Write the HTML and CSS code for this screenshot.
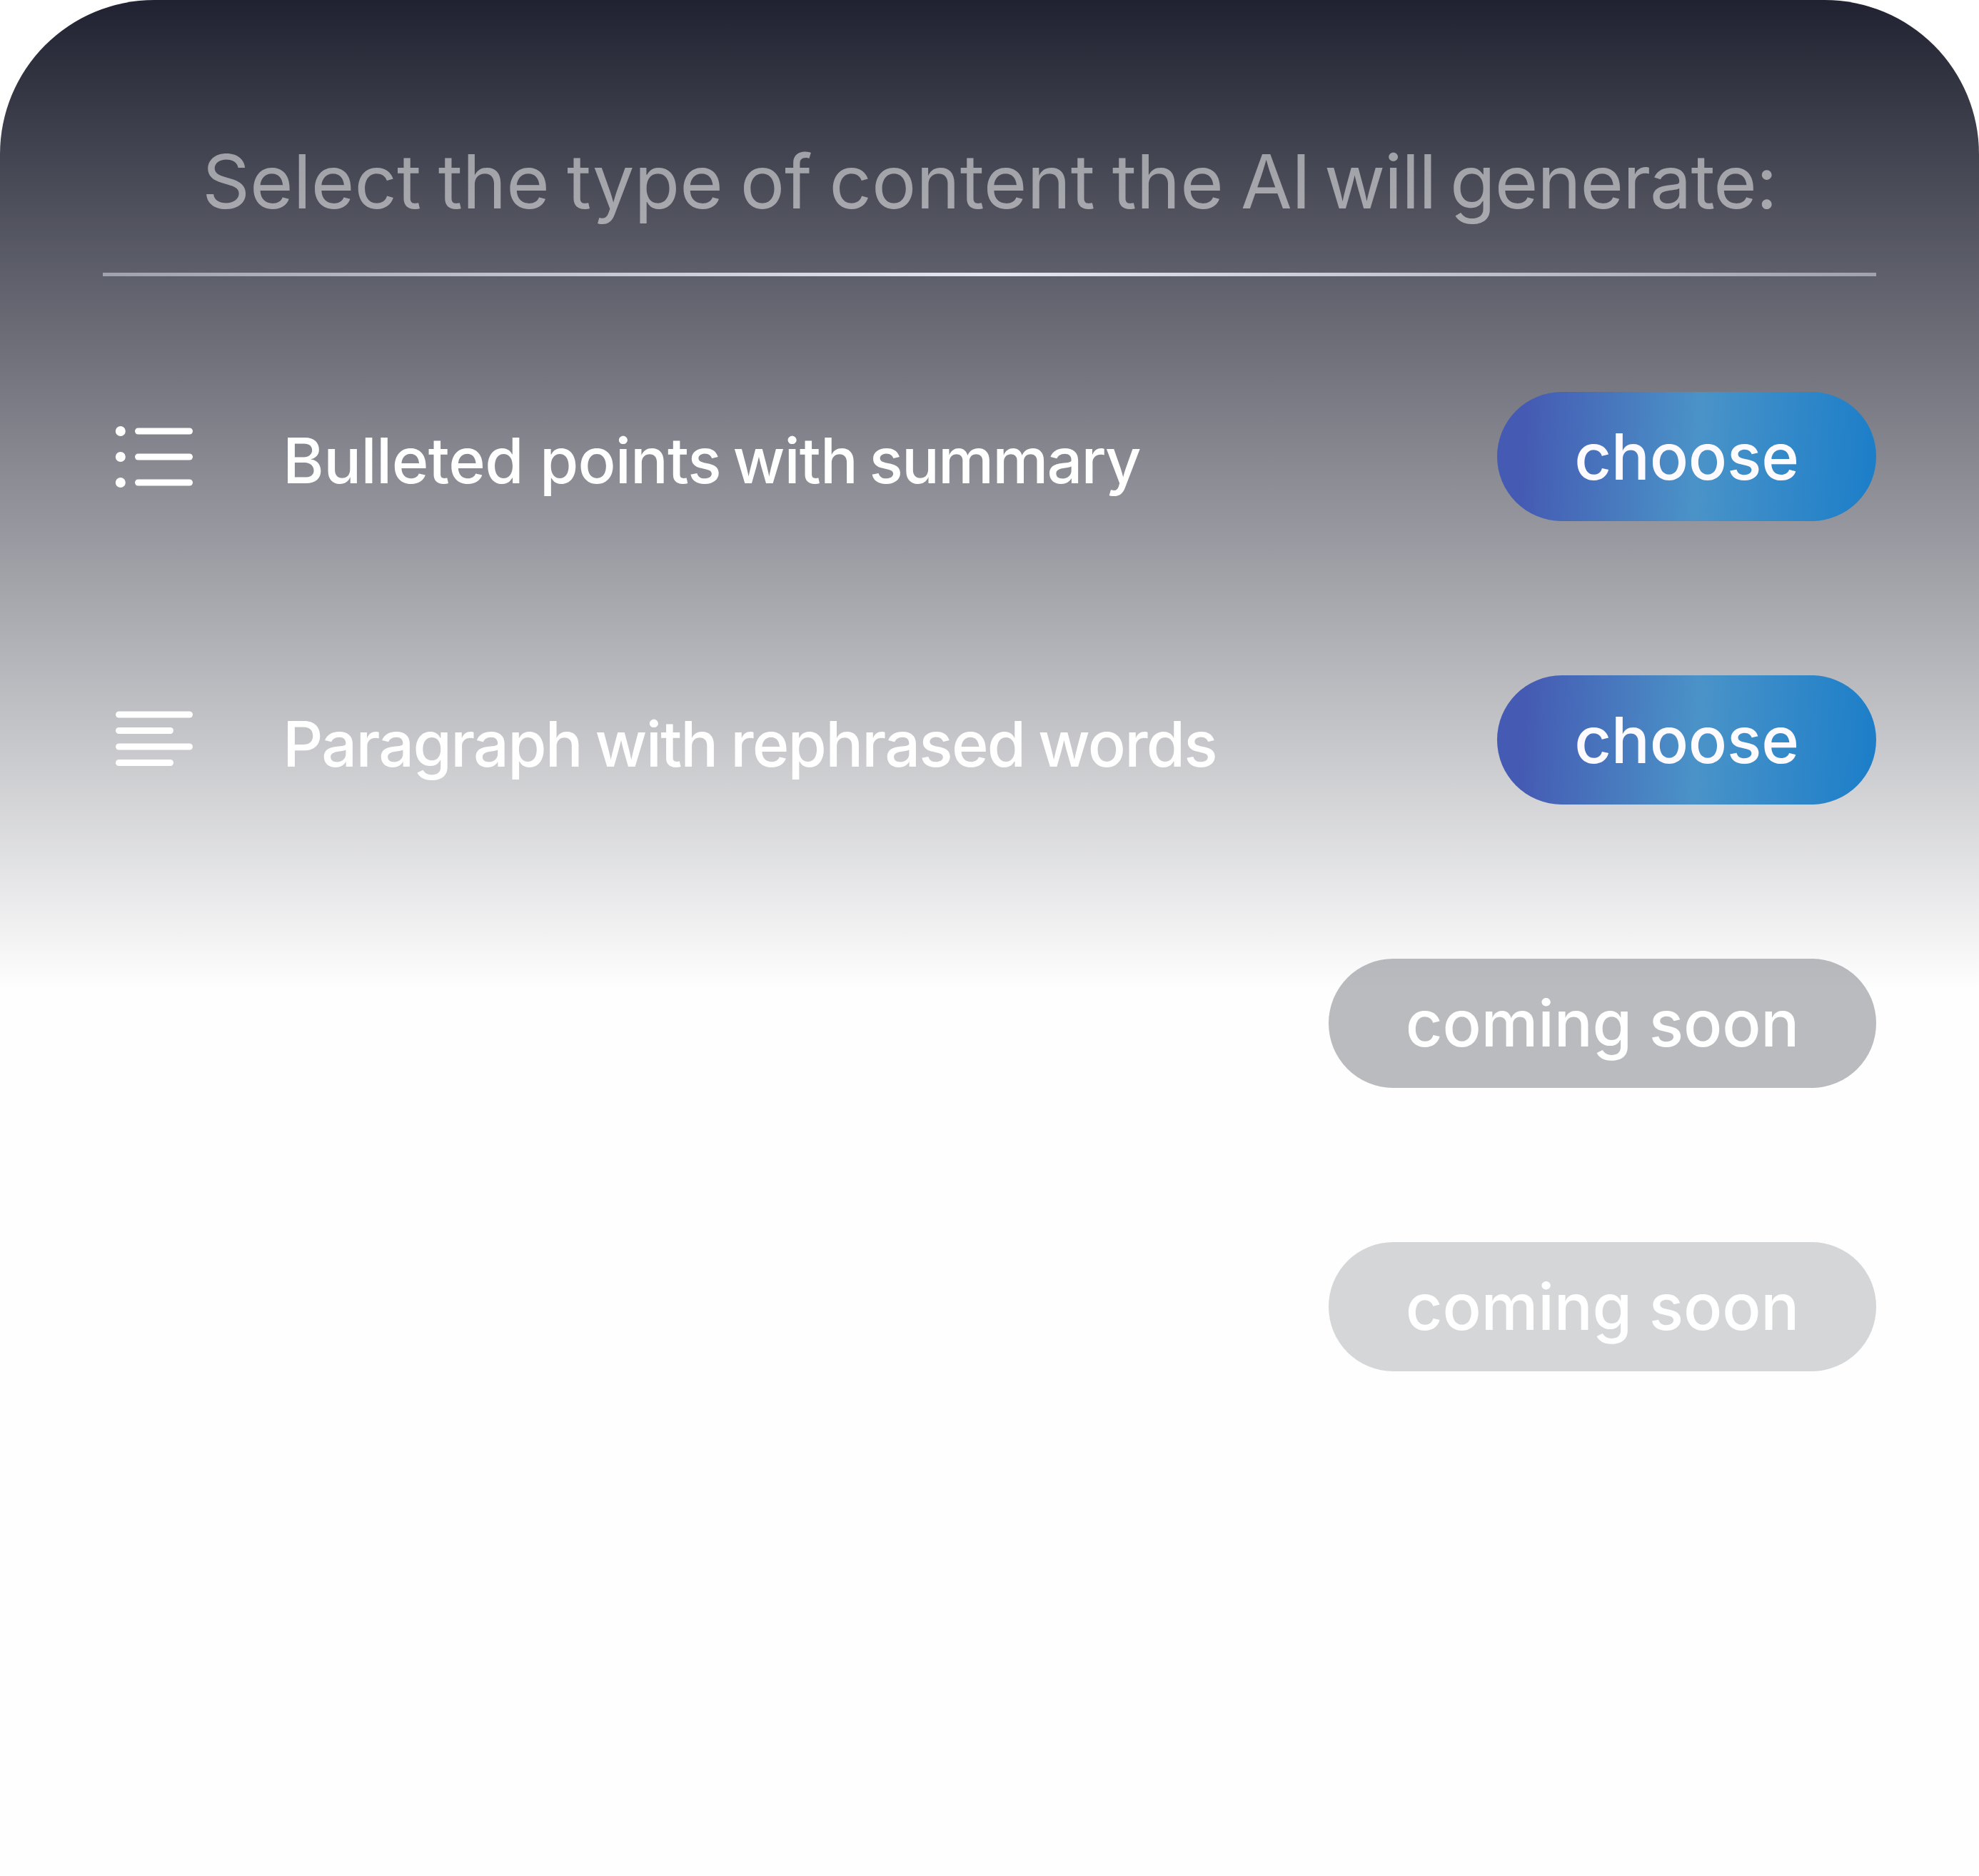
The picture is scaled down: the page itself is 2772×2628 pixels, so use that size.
FILE: index.html
```html
<!DOCTYPE html>
<html lang="en">
<head>
<meta charset="utf-8">
<title>Content type</title>
<link rel="stylesheet" href="styles.css">
</head>
<body>
<main class="panel">
  <h1 class="title">Select the type of content the <span class="title-end">AI will generate:</span></h1>
  <div class="divider"></div>
  <ul class="options">
    <li class="option">
      <svg class="icon" viewBox="0 0 144 144" fill="currentColor">
        <circle cx="24.8" cy="36" r="7"/><circle cx="24.8" cy="72" r="7"/><circle cx="24.8" cy="108" r="7"/>
        <rect x="45" y="31.5" width="81" height="9" rx="4.5"/>
        <rect x="45" y="67.5" width="81" height="9" rx="4.5"/>
        <rect x="45" y="103.5" width="81" height="9" rx="4.5"/>
      </svg>
      <span class="label label-bullets"><span class="lead">Bulleted </span>points with <span class="tail">summary</span></span>
      <button class="pill choose">choose</button>
    </li>
    <li class="option">
      <svg class="icon" viewBox="0 0 144 144" fill="currentColor">
        <rect x="18" y="31.5" width="108" height="9" rx="4.5"/>
        <rect x="18" y="54" width="81" height="9" rx="4.5"/>
        <rect x="18" y="76.5" width="108" height="9" rx="4.5"/>
        <rect x="18" y="99" width="81" height="9" rx="4.5"/>
      </svg>
      <span class="label label-paragraph">Paragraph with rephrased words</span>
      <button class="pill choose">choose</button>
    </li>
    <li class="option">
      <button class="pill soon">coming soon</button>
    </li>
    <li class="option">
      <button class="pill soon faded">coming soon</button>
    </li>
  </ul>
</main>
</body>
</html>
```
FILE: styles.css
```css
* { box-sizing: border-box; }

body {
  margin: 0;
  background: #fff;
  font-family: Inter, "Liberation Sans", sans-serif;
}

.panel {
  height: 2628px;
  padding: 181px 144px 0;
  border-radius: 216px 216px 0 0;
  background: linear-gradient(#202231 0, #fefefe 1385px);
  color: #fff;
}

.title {
  margin: 0;
  height: 201px;
  line-height: 147px;
  text-align: center;
  white-space: nowrap;
  font-size: 104px;
  font-weight: 400;
  letter-spacing: 0;
  word-spacing: -5.3px;
  color: rgba(255, 255, 255, 0.5);
}

.title-end {
  letter-spacing: -1.1px;
  word-spacing: -8.5px;
}

.divider {
  height: 5px;
  background: linear-gradient(90deg, #a0a2ae, #e4e6f0 50%, #a0a2ae);
}

.options {
  display: flex;
  flex-direction: column;
  gap: 216px;
  margin: 162px 0 0;
  padding: 0;
  list-style: none;
}

.option {
  display: flex;
  align-items: center;
  height: 181px;
}

.icon {
  flex: none;
  width: 144px;
  height: 144px;
}

.label {
  margin-left: 108px;
  padding-top: 10px;
  white-space: nowrap;
  font-size: 88px;
  font-weight: 500;
}

.label-bullets {
  letter-spacing: -0.9px;
  word-spacing: -6px;
}

.lead {
  letter-spacing: -0.6px;
  word-spacing: 0;
}

.tail { letter-spacing: -1.9px; }

.label-paragraph {
  letter-spacing: -1.8px;
  word-spacing: -3px;
}

.pill {
  height: 181px;
  margin-left: auto;
  padding: 0;
  border: 0;
  border-radius: 91px;
  font: 500 90px/181px Inter, "Liberation Sans", sans-serif;
  letter-spacing: -0.25px;
  color: #fdfbff;
}

.choose {
  width: 531px;
  background: linear-gradient(93.5deg, #455bb3 8%, #4a93c8 52.7%, #1e7fc8 97%);
}

.soon {
  width: 767px;
  background: rgba(124, 127, 134, 0.53);
  color: #fff;
}

.faded { background: rgba(122, 126, 132, 0.315); }
```
